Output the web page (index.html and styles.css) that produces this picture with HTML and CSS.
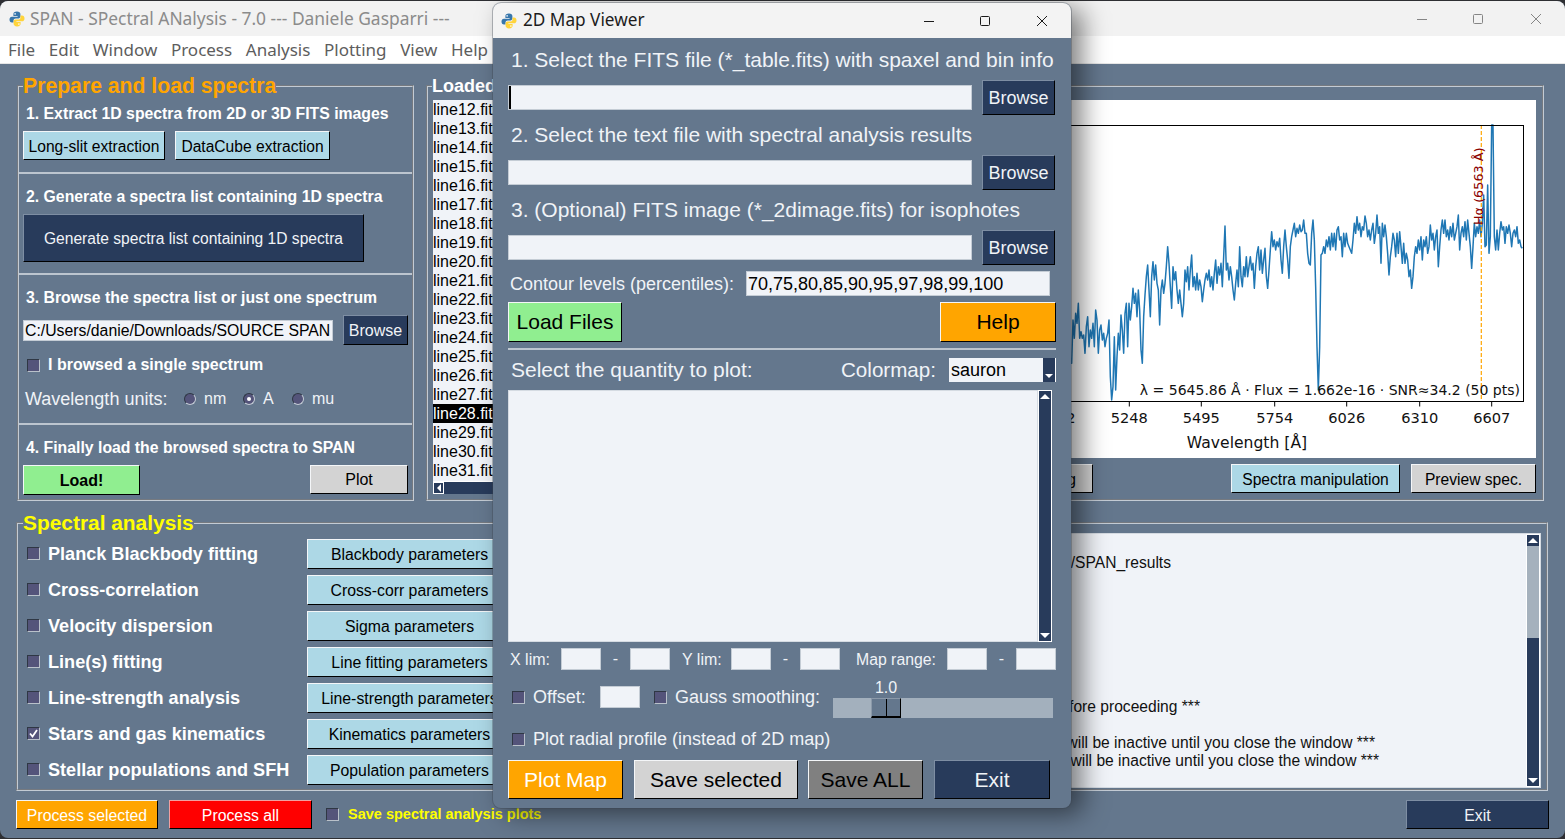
FILE: index.html
```html
<!DOCTYPE html>
<html lang="en">
<head>
<meta charset="utf-8">
<title>SPAN</title>
<link rel="stylesheet" href="styles.css">
</head>
<body>
<svg class="defs" width="0" height="0" aria-hidden="true">
  <symbol id="py" viewBox="0 0 16 16">
    <path fill="#3776ab" d="M8 .6C5.4.6 4.4 1.7 4.4 3.2V5h4.2v.7H3C1.400 5.700.5 6.800.5 8.600s.9 3 2.500 3h1.500V9.600c0-1.300 1-2.200 2.300-2.200h2.700c1.100 0 1.900-.8 1.900-1.900V3.200C11.400 1.700 10.200.6 8 .6Z"/>
    <path fill="#ffd43b" d="M8 15.400c2.600 0 3.600-1.100 3.600-2.600V11H7.400v-.7H13c1.600 0 2.500-1.100 2.500-2.900s-.9-3-2.500-3h-1.500v2c0 1.300-1 2.200-2.300 2.200H6.500c-1.100 0-1.900.8-1.900 1.900v2.300c0 1.500 1.200 2.600 3.400 2.600Z"/>
    <circle cx="6.100" cy="2.900" r=".8" fill="#fff"/><circle cx="9.900" cy="13.100" r=".8" fill="#fff"/>
  </symbol>
</svg>

<main class="window main-window">
  <header class="titlebar main-title">
    <svg class="app-icon"><use href="#py"/></svg>
    <span class="title-text">SPAN - SPectral ANalysis - 7.0 --- Daniele Gasparri ---</span>
    <div class="controls controls-main">
      <svg width="10" height="10" viewBox="0 0 10 10"><path d="M0 5.500H10"/></svg>
      <svg width="10" height="10" viewBox="0 0 10 10"><rect x=".5" y=".5" width="9" height="9" rx="1"/></svg>
      <svg width="10" height="10" viewBox="0 0 10 10"><path d="M0 0L10 10M10 0L0 10"/></svg>
    </div>
  </header>
  <nav class="menubar">
    <span>File</span><span>Edit</span><span>Window</span><span>Process</span><span>Analysis</span><span>Plotting</span><span>View</span><span>Help</span>
  </nav>
  <div class="main-body">
    <div class="top-row">
      <fieldset class="frame prepare">
        <legend class="legend-orange">Prepare and load spectra</legend>
        <section class="step step-1">
          <h3>1. Extract 1D spectra from 2D or 3D FITS images</h3>
          <div class="btn-row">
            <button class="btn blue w-142">Long-slit extraction</button>
            <button class="btn blue w-155">DataCube extraction</button>
          </div>
        </section>
        <section class="step step-2">
          <h3>2. Generate a spectra list containing 1D spectra</h3>
          <div class="btn-row">
            <button class="btn navy generate">Generate spectra list containing 1D spectra</button>
          </div>
        </section>
        <section class="step step-3">
          <h3>3. Browse the spectra list or just one spectrum</h3>
          <div class="btn-row browse-row">
            <input class="field path" value="C:/Users/danie/Downloads/SOURCE SPAN">
            <button class="btn navy browse-small">Browse</button>
          </div>
          <label class="check-line"><span class="check"></span><b>I browsed a single spectrum</b></label>
          <div class="units">
            <span class="units-label">Wavelength units:</span>
            <span class="radio"></span><span class="unit u-nm">nm</span>
            <span class="radio on"></span><span class="unit u-a">A</span>
            <span class="radio"></span><span class="unit">mu</span>
          </div>
        </section>
        <section class="step last">
          <h3>4. Finally load the browsed spectra to SPAN</h3>
          <div class="btn-row between">
            <button class="btn green load"><b>Load!</b></button>
            <button class="btn grey plot">Plot</button>
          </div>
        </section>
      </fieldset>

      <fieldset class="frame loaded">
        <legend class="legend-white">Loaded spectra</legend>
        <div class="loaded-inner">
          <div class="listbox">
            <div class="list-rows">
              <div>line12.fits</div><div>line13.fits</div><div>line14.fits</div><div>line15.fits</div><div>line16.fits</div>
              <div>line17.fits</div><div>line18.fits</div><div>line19.fits</div><div>line20.fits</div><div>line21.fits</div>
              <div>line22.fits</div><div>line23.fits</div><div>line24.fits</div><div>line25.fits</div><div>line26.fits</div>
              <div>line27.fits</div><div class="selected">line28.fits</div><div>line29.fits</div><div>line30.fits</div><div>line31.fits</div>
            </div>
            <div class="hscroll"><span class="sb-btn"><i class="tri-left"></i></span></div>
          </div>
          <div class="plot-col">
            <svg class="chart" width="776" height="358" viewBox="0 0 776 358">
              <rect width="776" height="358" fill="#fff"/>
              <g transform="translate(305,-10) scale(.33333)">
                <polyline class="spectrum" points="-60,700 -40,760 -20,690 0,740 20,820 24,690 28,745 32,670 36,700 40,640 44,745 48,725 52,745 56,735 60,790 64,710 68,680 72,770 76,720 80,745 84,700 88,770 92,660 96,690 100,790 104,720 108,705 112,750 116,730 120,770 124,745 128,730 132,690 136,860 140,930 144,890 148,740 152,900 156,800 160,730 164,780 168,675 172,720 176,790 180,670 184,640 188,770 192,640 196,690 200,650 204,595 208,640 212,610 216,680 220,600 224,660 228,780 232,820 236,680 240,615 244,560 248,525 252,600 256,680 260,560 264,515 268,570 272,525 276,580 280,600 284,705 288,600 292,570 296,610 300,580 304,530 308,470 312,520 316,590 320,655 324,530 328,570 332,545 336,600 340,640 344,600 348,640 352,680 356,640 360,540 364,575 368,530 372,600 376,540 380,495 384,590 388,560 392,600 396,550 400,600 404,570 408,590 412,635 416,600 420,570 424,550 428,570 432,540 436,590 440,560 444,600 448,550 452,510 456,580 460,530 464,555 468,520 472,590 476,500 480,408 484,540 488,520 492,570 496,530 500,560 504,600 508,630 512,580 516,540 520,590 524,470 528,560 532,590 536,530 540,560 544,500 548,560 552,530 556,500 560,540 564,520 568,595 572,530 576,490 580,470 584,540 588,480 592,550 596,510 600,475 604,560 608,595 612,540 616,480 620,425 624,470 628,450 632,480 636,455 640,470 644,445 648,510 652,550 656,470 660,420 664,470 668,510 672,565 676,470 680,440 684,420 688,400 692,440 696,415 700,430 704,405 708,425 712,420 716,390 720,430 724,430 728,490 732,520 736,525 740,430 744,390 748,450 752,590 756,770 760,900 764,770 768,495 772,490 776,470 780,490 784,450 788,470 792,440 796,480 800,430 804,470 808,430 812,480 816,420 820,410 824,450 828,440 832,500 836,430 840,470 844,430 848,460 852,470 856,480 860,490 864,450 868,400 872,430 876,380 880,420 884,400 888,440 892,410 896,420 900,378 904,400 908,440 912,420 916,450 920,420 924,400 928,460 932,430 936,375 940,430 944,410 948,520 952,400 956,440 960,405 964,440 968,490 972,555 976,500 980,470 984,430 988,450 992,500 996,430 1000,490 1004,425 1008,470 1012,520 1016,460 1020,520 1024,490 1028,510 1032,560 1036,540 1040,595 1044,560 1048,500 1052,470 1056,490 1060,450 1064,480 1068,440 1072,510 1076,450 1080,470 1084,440 1088,490 1092,470 1096,405 1100,450 1104,430 1108,480 1112,440 1116,420 1120,530 1124,470 1128,420 1132,390 1136,430 1140,390 1144,440 1148,420 1152,450 1156,410 1160,440 1164,400 1168,450 1172,430 1176,410 1180,375 1184,480 1188,430 1192,410 1196,440 1200,395 1204,450 1208,390 1212,430 1216,470 1220,535 1224,470 1228,400 1232,440 1236,410 1240,430 1244,390 1248,440 1252,400 1256,315 1260,470 1264,465 1268,285 1272,490 1276,440 1280,105 1284,105 1288,440 1292,480 1296,420 1300,480 1304,430 1308,395 1312,420 1316,410 1320,460 1324,410 1328,430 1332,405 1336,430 1340,470 1344,430 1348,420 1352,440 1356,410 1360,460 1364,450 1368,470 1372,475"/>
              </g>
              <line class="ha-line" x1="721.300" y1="25" x2="721.300" y2="301"/>
              <text class="ha-text" transform="translate(723,125) rotate(-90)">Hα (6563 Å)</text>
              <rect class="axes" x="100" y="25.500" width="663.500" height="276"/>
              <g class="ticks">
                <path d="M297 301.500v5M369.300 301.500v5M441.300 301.500v5M514.700 301.500v5M586.700 301.500v5M659.700 301.500v5M731.700 301.500v5"/>
              </g>
              <g class="tick-labels">
                <text x="297" y="323">5012</text><text x="369.300" y="323">5248</text><text x="441.300" y="323">5495</text><text x="514.700" y="323">5754</text><text x="586.700" y="323">6026</text><text x="659.700" y="323">6310</text><text x="731.700" y="323">6607</text>
                <text class="axis-title" x="487" y="348">Wavelength [Å]</text>
              </g>
              <text class="readout" x="760" y="295">λ = 5645.86 Å · Flux = 1.662e-16 · SNR≈34.2 (50 pts)</text>
            </svg>
            <div class="chart-buttons">
              <button class="btn grey text-edit">Text editing</button>
              <button class="btn blue manip">Spectra manipulation</button>
              <button class="btn grey preview">Preview spec.</button>
            </div>
          </div>
        </div>
      </fieldset>
    </div>

    <fieldset class="frame analysis">
      <legend class="legend-yellow">Spectral analysis</legend>
      <div class="analysis-inner">
        <div class="task-list">
          <div class="task"><span class="check"></span><b>Planck Blackbody fitting</b><button class="btn blue">Blackbody parameters</button></div>
          <div class="task"><span class="check"></span><b>Cross-correlation</b><button class="btn blue">Cross-corr parameters</button></div>
          <div class="task"><span class="check"></span><b>Velocity dispersion</b><button class="btn blue">Sigma parameters</button></div>
          <div class="task"><span class="check"></span><b>Line(s) fitting</b><button class="btn blue">Line fitting parameters</button></div>
          <div class="task"><span class="check"></span><b>Line-strength analysis</b><button class="btn blue">Line-strength parameters</button></div>
          <div class="task"><span class="check on"><svg width="11" height="11" viewBox="0 0 11 11"><path d="M2 5.500L4.500 8.500L9 2"/></svg></span><b>Stars and gas kinematics</b><button class="btn blue">Kinematics parameters</button></div>
          <div class="task"><span class="check"></span><b>Stellar populations and SFH</b><button class="btn blue">Population parameters</button></div>
        </div>
        <div class="log-panel">
          <div class="log-text">
            <div class="log-line log-1">Results folder: C:/Users/danie/Documents/SPAN_results</div>
            <div class="log-line log-2">*** Please check the loaded spectra and parameters before proceeding ***</div>
            <div class="log-line log-3">*** The main panel of SPAN will be inactive until you close the window ***</div>
            <div class="log-line log-4">*** The spectral analysis panel will be inactive until you close the window ***</div>
          </div>
          <div class="vscroll log-scroll">
            <span class="sb-btn"><i class="tri-up"></i></span>
            <span class="sb-thumb"></span>
            <span class="sb-track"></span>
            <span class="sb-btn"><i class="tri-down"></i></span>
          </div>
        </div>
      </div>
    </fieldset>

    <div class="bottom-row">
      <button class="btn orange p-sel">Process selected</button>
      <button class="btn red p-all">Process all</button>
      <span class="check save-check"></span>
      <b class="save-text">Save spectral analysis plots</b>
      <button class="btn navy main-exit">Exit</button>
    </div>
  </div>
</main>

<section class="window modal">
  <header class="titlebar modal-title">
    <svg class="app-icon"><use href="#py"/></svg>
    <span class="title-text">2D Map Viewer</span>
    <div class="controls controls-modal">
      <svg width="10" height="10" viewBox="0 0 10 10"><path d="M0 5.500H10"/></svg>
      <svg width="10" height="10" viewBox="0 0 10 10"><rect x=".5" y=".5" width="9" height="9" rx="1"/></svg>
      <svg width="10" height="10" viewBox="0 0 10 10"><path d="M0 0L10 10M10 0L0 10"/></svg>
    </div>
  </header>
  <div class="modal-body">
    <div class="m-head first">1. Select the FITS file (*_table.fits) with spaxel and bin info</div>
    <div class="file-row">
      <div class="field file-field"><span class="caret"></span></div>
      <button class="btn navy m-browse">Browse</button>
    </div>
    <div class="m-head">2. Select the text file with spectral analysis results</div>
    <div class="file-row">
      <div class="field file-field"></div>
      <button class="btn navy m-browse">Browse</button>
    </div>
    <div class="m-head">3. (Optional) FITS image (*_2dimage.fits) for isophotes</div>
    <div class="file-row">
      <div class="field file-field"></div>
      <button class="btn navy m-browse">Browse</button>
    </div>
    <div class="contour-row">
      <span class="contour-label">Contour levels (percentiles):</span>
      <input class="field contour" value="70,75,80,85,90,95,97,98,99,100">
    </div>
    <div class="load-row">
      <button class="btn green big load-files">Load Files</button>
      <button class="btn orange big help">Help</button>
    </div>
    <hr class="m-sep">
    <div class="quantity-row">
      <span class="q-label">Select the quantity to plot:</span>
      <span class="q-label cmap-label">Colormap:</span>
      <div class="select"><span>sauron</span><i class="select-arrow"><i class="tri-down"></i></i></div>
    </div>
    <div class="m-list">
      <div class="m-list-area"></div>
      <div class="vscroll">
        <span class="sb-btn"><i class="tri-up"></i></span>
        <span class="sb-track"></span>
        <span class="sb-btn"><i class="tri-down"></i></span>
      </div>
    </div>
    <div class="lim-row">
      <span class="lim-label first-label">X lim:</span><span class="field"></span><span class="dash">-</span><span class="field"></span>
      <span class="lim-label y-label">Y lim:</span><span class="field"></span><span class="dash">-</span><span class="field"></span>
      <span class="lim-label map-label">Map range:</span><span class="field"></span><span class="dash">-</span><span class="field"></span>
    </div>
    <div class="offset-row">
      <span class="check"></span>
      <span class="opt off-label">Offset:</span>
      <span class="field off-input"></span>
      <span class="check gauss-check"></span>
      <span class="opt gauss-label">Gauss smoothing:</span>
      <div class="slider">
        <span class="slider-value">1.0</span>
        <div class="slider-track"><span class="slider-thumb"></span></div>
      </div>
    </div>
    <div class="radial-row">
      <span class="check"></span>
      <span class="opt">Plot radial profile (instead of 2D map)</span>
    </div>
    <div class="action-row">
      <button class="btn orange big a-plot">Plot Map</button>
      <button class="btn grey big a-save">Save selected</button>
      <button class="btn darkgrey big a-all">Save ALL</button>
      <button class="btn navy big a-exit">Exit</button>
    </div>
  </div>
</section>
</body>
</html>
```
FILE: styles.css
```css
* { box-sizing: border-box; }
html, body { margin: 0; height: 100%; }
body {
  width: 1565px;
  height: 839px;
  overflow: hidden;
  background: #2e2f33;
  position: relative;
  font-family: "Liberation Sans", Arial, sans-serif;
  font-size: 16px;
  color: #000;
}
.defs { position: absolute; }

.window { position: absolute; overflow: hidden; }
.main-window {
  left: 0; top: 1px; width: 1565px; height: 837px;
  border-radius: 8px;
  background: #64778d;
  display: flex;
  flex-direction: column;
}
.modal {
  left: 493px; top: 3px; width: 578px; height: 805px;
  border-radius: 8px;
  background: #64778d;
  box-shadow: 0 0 0 1px rgba(60, 70, 80, .35), 11px 6px 26px rgba(0, 0, 0, .5);
  display: flex;
  flex-direction: column;
}

/* title bars */
.titlebar {
  background: #f2f2f2;
  display: flex;
  align-items: center;
  font-family: "Noto Sans", "Open Sans", sans-serif;
  flex: none;
}
.main-title { height: 35px; padding-left: 9px; }
.modal-title { height: 35px; padding-left: 8px; background: #f3f3f3; }
.app-icon { width: 16px; height: 16px; flex: none; }
.main-title .title-text { margin-left: 5px; font-size: 17.400px; color: #8b8b8b; padding-bottom: 2px; }
.modal-title .title-text { margin-left: 6px; font-size: 17.200px; color: #1c1c1c; padding-bottom: 2px; }
.controls { margin-left: auto; display: flex; align-items: center; gap: 46px; }
.controls svg { fill: none; stroke-width: 1; }
.controls-main { padding-right: 24px; }
.controls-main svg { stroke: #858585; }
.controls-main svg:last-child { margin-left: 2px; }
.controls-modal { padding-right: 24px; }
.controls-modal svg { stroke: #1a1a1a; }
.controls-modal svg:last-child { margin-left: 1px; }

.menubar {
  height: 28px;
  flex: none;
  background: #fff;
  border-bottom: 1px solid #e6e6e6;
  display: flex;
  align-items: center;
  gap: 13.600px;
  padding-left: 8px;
  font-family: "Noto Sans", "Open Sans", sans-serif;
  font-size: 17px;
  color: #5d5d5d;
}

/* main layout */
.main-body { flex: 1; display: flex; flex-direction: column; padding: 12px 16px 0; }
.top-row { display: flex; gap: 12px; margin: 0 5px 0 1px; height: 425px; flex: none; }
.frame {
  margin: 0;
  padding: 0;
  min-width: 0;
  border: 2px groove #c3cbd4;
}
.frame legend {
  padding: 0;
  font-weight: 700;
  line-height: 20px;
  height: 20px;
}
.legend-orange { color: #ffa500; font-size: 21.200px; margin-left: 4px; }
.legend-white { color: #fff; font-size: 18px; margin-left: 4px; }
.legend-yellow { color: #ff0; font-size: 20.900px; margin-left: 5px; }

.prepare { width: 397px; flex: none; }
.step { padding: 12px 4px 11px 4px; border-bottom: 2px solid #bcc5cf; }
.step-1 { padding-top: 7px; padding-bottom: 12px; }
.step-3 { padding-bottom: 14px; }
.step.last { border-bottom: 0; padding-bottom: 0; }
.step h3 {
  margin: 1px 0 7px 3px;
  font-size: 15.800px;
  line-height: 20px;
  font-weight: 700;
  color: #fff;
}
.btn-row { display: flex; gap: 10px; align-items: center; }
.btn-row.between { justify-content: space-between; align-items: flex-start; }

.btn {
  margin: 0;
  padding: 1px 0 0;
  font: 15.600px "Liberation Sans", Arial, sans-serif;
  color: #000;
  border: 1px solid;
  border-color: #f4f6f8 #000 #000 #f4f6f8;
  white-space: nowrap;
  overflow: hidden;
  display: block;
}
.btn.blue { background: #add8e6; }
.btn.navy { background: #283b5b; color: #f0f3f7; border-color: #7e8ea3 #000 #000 #7e8ea3; }
.btn.green { background: #90ee90; }
.btn.grey { background: #d3d3d3; }
.btn.darkgrey { background: #808080; }
.btn.orange { background: #ffa500; color: #fff; }
.btn.red { background: #f00; color: #fff; border-color: #f0a0a0 #000 #000 #f0a0a0; }
.btn.big { font-size: 21px; padding-top: 0; }
.w-142 { width: 142px; height: 29px; padding-top: 2px; }
.w-155 { width: 155px; height: 29px; padding-top: 2px; }
.generate { width: 341px; height: 48px; }
.browse-small { width: 65px; height: 30px; font-size: 16px; }
.load { width: 117px; height: 30px; font-size: 16px; }
.plot { width: 98px; height: 29px; font-size: 16px; }

.field {
  display: block;
  background: #f0f3f8;
  border: 1px solid #c4ccd5;
  margin: 0;
  padding: 0;
  font: 16px "Liberation Sans", Arial, sans-serif;
  color: #000;
  outline: 0;
}
.path { width: 310px; height: 21px; padding: 1px 0 0 1px; font-size: 15.800px; }

.check {
  width: 13px;
  height: 13px;
  flex: none;
  display: inline-flex;
  align-items: center;
  justify-content: center;
  background: #54547a;
  border: 1px solid;
  border-color: #2f3744 #b9c1ca #b9c1ca #2f3744;
}
.check svg { fill: none; stroke: #fff; stroke-width: 1.800; }
.check-line { display: flex; align-items: center; gap: 8px; margin: 10px 0 0 4px; color: #fff; height: 20px; }
.units { display: flex; align-items: center; margin: 14px 0 0 2px; height: 20px; color: #f0f3f7; }
.units-label { font-size: 18px; width: 159px; flex: none; }
.radio {
  width: 12px;
  height: 12px;
  border-radius: 50%;
  flex: none;
  background: #54547a;
  border: 1px solid;
  border-color: #2f3744 #c4ccd5 #c4ccd5 #2f3744;
  display: inline-flex;
  align-items: center;
  justify-content: center;
}
.radio.on::after { content: ""; width: 4px; height: 4px; border-radius: 50%; background: #fff; }
.unit { margin-left: 8px; width: 39px; flex: none; }
.u-nm { width: 39px; }
.u-a { width: 29px; }

/* loaded panel */
.loaded { flex: 1; }
.loaded-inner { display: flex; justify-content: space-between; padding: 4px 6px 0 5px; }
.listbox { width: 310px; height: 394px; background: #f0f3f8; border: 0; display: flex; flex-direction: column; }
.list-rows { height: 381px; overflow: hidden; line-height: 19px; font-size: 16px; }
.list-rows > div { height: 19px; }
.list-rows .selected { background: #000; color: #fff; }
.hscroll { flex: 1; background: #283b5b; border-top: 1px solid #fff; display: flex; }
.sb-btn {
  flex: none;
  width: 100%;
  height: 11px;
  background: #283b5b;
  display: flex;
  align-items: center;
  justify-content: center;
}
.hscroll .sb-btn { width: 11px; height: 100%; border: 1px solid #fff; }
.tri-up, .tri-down, .tri-left { display: block; width: 0; height: 0; }
.tri-up { border: 5px solid transparent; border-top: 0; border-bottom: 5px solid #fff; }
.tri-down { border: 5px solid transparent; border-bottom: 0; border-top: 5px solid #fff; }
.tri-left { border: 4px solid transparent; border-left: 0; border-right: 4px solid #fff; }

.plot-col { width: 776px; flex: none; }
.chart { display: block; font-family: "DejaVu Sans", sans-serif; }
.spectrum { fill: none; stroke: #1f77b4; stroke-width: 4.500; stroke-linejoin: round; }
.ha-line { stroke: #ffa500; stroke-width: 1.200; stroke-dasharray: 4 2; }
.ha-text { fill: #8b0000; font-size: 12.800px; }
.axes { fill: none; stroke: #000; stroke-width: 1; }
.ticks path { stroke: #000; stroke-width: 1; fill: none; }
.tick-labels text { font-size: 14.600px; text-anchor: middle; fill: #111; }
.tick-labels .axis-title { font-size: 15.600px; }
.readout { font-size: 14px; text-anchor: end; fill: #111; }
.chart-buttons { display: flex; justify-content: flex-end; gap: 11px; margin-top: 6px; }
.chart-buttons .btn { height: 29px; padding-top: 2px; }
.text-edit { width: 113px; margin-right: 127px; }
.manip { width: 169px; }
.preview { width: 125px; }

/* spectral analysis */
.analysis { height: 278px; margin: 12px 1px 0 0; flex: none; }
.analysis-inner { display: flex; gap: 8px; padding: 0 5px 0 9px; }
.task-list { width: 485px; flex: none; padding-top: 6px; display: flex; flex-direction: column; gap: 6px; }
.task { display: grid; grid-template-columns: 21px 259px 205px; align-items: center; height: 30px; }
.task b { font-size: 18.100px; color: #fff; white-space: nowrap; }
.task .btn { height: 30px; font-size: 15.800px; }
.task .check { margin-bottom: 1px; }
.log-panel { flex: 1; height: 255px; display: flex; background: #f0f3f8; border: 1px solid #d5dbe2; overflow: hidden; }
.log-text { flex: 1; overflow: hidden; line-height: 18px; padding-top: 20px; min-width: 0; font-size: 15.600px; }
.log-line { display: flex; justify-content: flex-end; white-space: pre; height: 18px; color: #111; }
.log-1 { width: 650px; }
.log-2 { width: 679px; margin-top: 126px; }
.log-3 { width: 854px; margin-top: 18px; }
.log-4 { width: 858px; }
.vscroll { width: 14px; flex: none; display: flex; flex-direction: column; background: #283b5b; border: 1px solid #fff; }
.sb-track { flex: 1; background: #283b5b; }
.sb-thumb { height: 92px; background: #a5b1bd; flex: none; }

.bottom-row { display: flex; align-items: center; margin-top: 9px; height: 29px; }
.bottom-row .btn { height: 29px; font-size: 15.800px; padding-top: 2px; }
.p-sel { width: 142px; }
.p-all { width: 143px; margin-left: 11px; }
.save-check { margin-left: 14px; }
.save-text { margin: 0 0 2px 9px; font-size: 14.500px; color: #ff0; }
.main-exit { width: 143px; margin-left: auto; }

/* modal */
.modal-body { flex: 1; padding: 10px 15px 0; display: flex; flex-direction: column; color: #f0f3f7; }
.m-head { font-size: 21px; line-height: 24px; height: 24px; padding-left: 3px; margin-top: 8px; white-space: nowrap; }
.m-head.first { margin-top: 0; }
.file-row { display: flex; align-items: center; gap: 10px; height: 35px; margin-top: 8px; }
.file-field { width: 464px; height: 25px; flex: none; position: relative; }
.caret { position: absolute; left: 0; top: 0; width: 2px; height: 23px; background: #000; }
.btn.m-browse { width: 73px; height: 35px; font-size: 18px; }
.contour-row { display: flex; align-items: center; height: 25px; margin-top: 6px; }
.contour-label { width: 238px; padding: 1px 0 0 2px; font-size: 18px; flex: none; }
.contour { width: 304px; height: 25px; font-size: 18px; padding: 1px 0 0 1px; }
.load-row { display: flex; justify-content: space-between; margin-top: 6px; height: 40px; }
.load-files { width: 114px; }
.btn.help { width: 116px; color: #000; }
.m-sep { margin: 6px 0 0; height: 2px; border: 0; background: #bcc5cf; flex: none; width: 548px; }
.quantity-row { display: flex; align-items: center; height: 24px; margin-top: 8px; }
.q-label { font-size: 21px; padding-left: 3px; white-space: nowrap; }
.cmap-label { margin-left: auto; padding: 0; margin-right: 13px; font-size: 20.600px; }
.select { width: 107px; height: 24px; background: #f0f3f8; display: flex; justify-content: space-between; font-size: 18px; line-height: 25px; color: #000; padding-left: 2px; flex: none; }
.select-arrow { width: 13px; background: #283b5b; border-right: 1px solid #fff; display: flex; flex-direction: column; justify-content: flex-end; align-items: center; padding-bottom: 4px; }
.select-arrow .tri-down { border-width: 4px 4px 0; }
.m-list { display: flex; height: 252px; margin-top: 8px; flex: none; width: 544px; }
.m-list-area { flex: 1; background: #f0f3f8; border: 1px solid #d5dbe2; }
.lim-row {
  display: grid;
  grid-template-columns: 53px 40px 29px 40px 61px 40px 29px 40px 107px 40px 29px 40px;
  height: 22px;
  margin-top: 6px;
  align-items: center;
  font-size: 16px;
  flex: none;
}
.lim-row .field { height: 22px; }
.lim-label { white-space: nowrap; padding-top: 1px; }
.first-label { padding-left: 2px; }
.y-label { padding-left: 12px; }
.map-label { padding-left: 16px; font-size: 15.800px; }
.dash { text-align: center; }
.offset-row { display: flex; align-items: center; gap: 8px; height: 40px; margin-top: 8px; padding-left: 4px; flex: none; }
.offset-row > .check, .offset-row > .opt, .offset-row > .field { margin-bottom: 2px; }
.opt { font-size: 18px; white-space: nowrap; }
.off-label { width: 59px; }
.off-input { width: 40px; height: 22px; }
.gauss-check { margin-left: 6px; }
.gauss-label { width: 150px; }
.slider { width: 220px; flex: none; }
.slider-value { display: block; width: 30px; margin-left: 38px; text-align: center; height: 20px; line-height: 20px; font-size: 16px; }
.slider-track { height: 20px; background: #a3b0bd; position: relative; }
.slider-thumb {
  position: absolute;
  left: 38px;
  top: 0;
  width: 30px;
  height: 20px;
  background: linear-gradient(90deg, #64778d 0, #64778d 14px, #000 14px, #000 15px, #64778d 15px);
  border-top: 1px solid #8b99a9;
  border-left: 1px solid #8b99a9;
  border-right: 1px solid #000;
  border-bottom: 2px solid #000;
}
.radial-row { display: flex; align-items: center; gap: 8px; height: 20px; margin-top: 11px; padding-left: 4px; flex: none; }
.action-row { display: flex; height: 39px; margin-top: 11px; flex: none; }
.action-row .btn { height: 39px; }
.a-plot { width: 115px; }
.a-save { width: 164px; margin-left: 11px; }
.a-all { width: 115px; margin-left: 10px; }
.a-exit { width: 116px; margin-left: 11px; }
```
